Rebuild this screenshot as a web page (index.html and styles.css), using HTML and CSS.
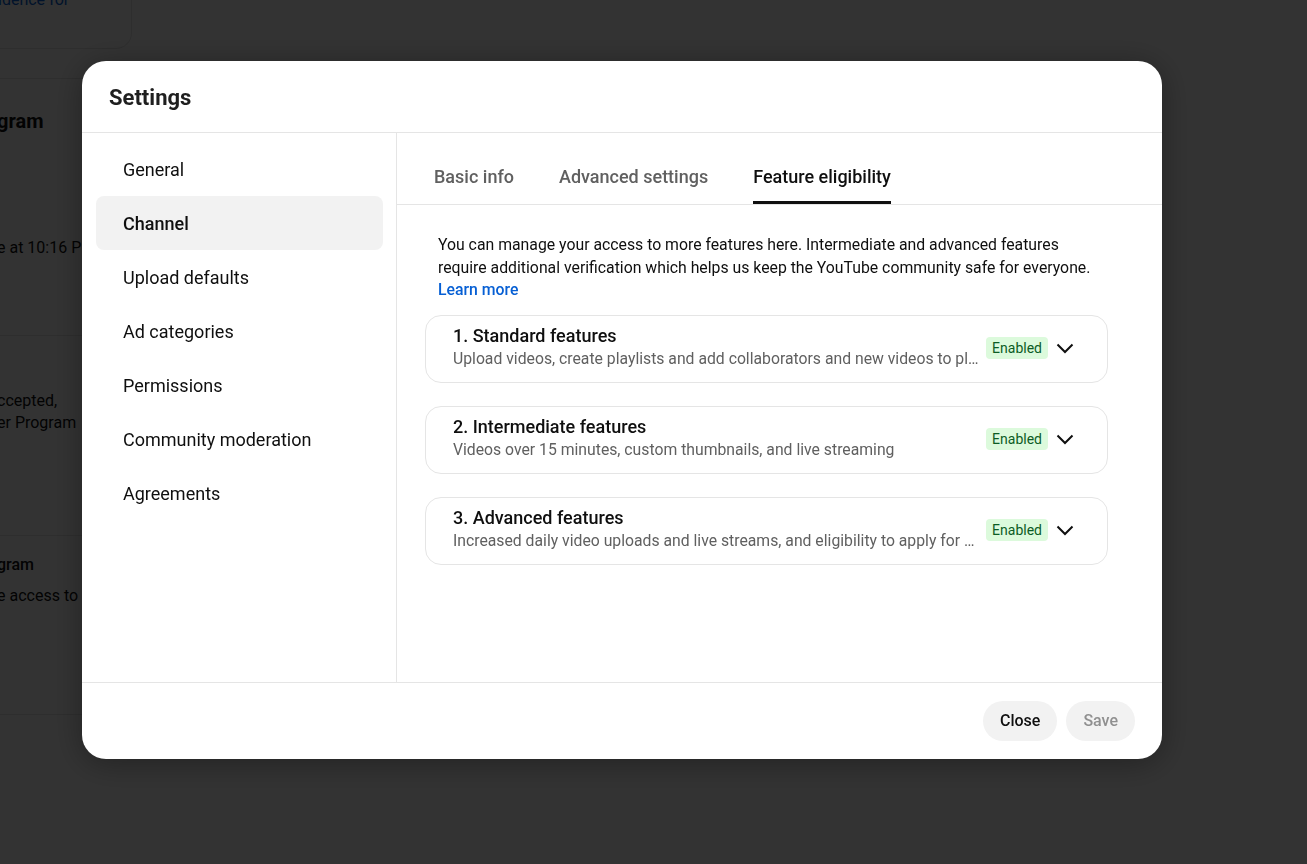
FILE: index.html
```html
<!DOCTYPE html>
<html lang="en">
<head>
    <meta charset="UTF-8">
    <meta name="viewport" content="width=device-width, initial-scale=1.0">
    <title>Settings</title>
    <link rel="stylesheet" href="styles.css">
</head>
<body>
    <!-- page behind the dialog -->
    <div class="page">
        <div class="bg-card"><span class="bg-link">idence for</span></div>
        <div class="bg-section first">
            <div class="bg-title">gram</div>
            <div class="bg-text date">e at 10:16 PM</div>
        </div>
        <div class="bg-section second">
            <div class="bg-text">ccepted,</div>
            <div class="bg-text">er Program</div>
        </div>
        <div class="bg-section third">
            <div class="bg-subtitle">gram</div>
            <div class="bg-text">e access to all</div>
        </div>
    </div>

    <div class="overlay">
        <div class="modal">
            <div class="modal-header">Settings</div>

            <div class="modal-body">
                <ul class="nav">
                    <li class="nav-item">General</li>
                    <li class="nav-item active">Channel</li>
                    <li class="nav-item">Upload defaults</li>
                    <li class="nav-item">Ad categories</li>
                    <li class="nav-item">Permissions</li>
                    <li class="nav-item">Community moderation</li>
                    <li class="nav-item">Agreements</li>
                </ul>

                <div class="content">
                    <div class="tabs">
                        <div class="tab">Basic info</div>
                        <div class="tab">Advanced settings</div>
                        <div class="tab active">Feature eligibility</div>
                    </div>

                    <div class="panel">
                        <p class="intro">You can manage your access to more features here. Intermediate and advanced features require additional verification which helps us keep the YouTube community safe for everyone. <a href="#" class="link">Learn more</a></p>

                        <div class="feature">
                            <div class="feature-text">
                                <div class="feature-title">1. Standard features</div>
                                <div class="feature-desc">Upload videos, create playlists and add collaborators and new videos to playlists, and more</div>
                            </div>
                            <span class="badge">Enabled</span>
                            <svg class="chevron" viewBox="0 0 24 24"><path d="M4.5 8.5L12 16l7.5-7.5"/></svg>
                        </div>

                        <div class="feature">
                            <div class="feature-text">
                                <div class="feature-title">2. Intermediate features</div>
                                <div class="feature-desc">Videos over 15 minutes, custom thumbnails, and live streaming</div>
                            </div>
                            <span class="badge">Enabled</span>
                            <svg class="chevron" viewBox="0 0 24 24"><path d="M4.5 8.5L12 16l7.5-7.5"/></svg>
                        </div>

                        <div class="feature">
                            <div class="feature-text">
                                <div class="feature-title">3. Advanced features</div>
                                <div class="feature-desc">Increased daily video uploads and live streams, and eligibility to apply for monetization</div>
                            </div>
                            <span class="badge">Enabled</span>
                            <svg class="chevron" viewBox="0 0 24 24"><path d="M4.5 8.5L12 16l7.5-7.5"/></svg>
                        </div>
                    </div>
                </div>
            </div>

            <div class="modal-footer">
                <button class="btn">Close</button>
                <button class="btn" disabled>Save</button>
            </div>
        </div>
    </div>
</body>
</html>
```

FILE: styles.css
```css
* { box-sizing: border-box; }
body { margin: 0; font-family: Roboto, "Noto Sans", Arial, sans-serif; color: #0f0f0f; background: #fff; overflow: hidden; }

/* background page */
.page { width: 400px; margin-left: -3px; }
.bg-card { width: 150px; height: 56px; margin-top: -7px; margin-left: -15px; padding-left: 15px; border: 1px solid #e5e5e5; border-top: none; border-radius: 0 0 16px 16px; line-height: 14px; }
.bg-link { color: #065fd4; font-size: 16px; }
.bg-section { border-top: 1px solid #e5e5e5; }
.bg-section.first { height: 257px; padding-top: 28px; margin-top: 29px; }
.bg-section.second { height: 200px; padding-top: 54px; }
.bg-section.third { height: 180px; padding-top: 17px; border-bottom: 1px solid #e5e5e5; }
.bg-title { font-size: 20px; font-weight: 700; line-height: 28px; }
.bg-subtitle { font-size: 16px; font-weight: 500; line-height: 24px; }
.bg-text { font-size: 16px; line-height: 22px; }
.bg-text.date { margin-top: 102px; }
.third .bg-text { margin-top: 8px; }

/* dialog */
.overlay { position: fixed; inset: 0; background: rgba(0, 0, 0, 0.8); padding: 61px 0 0 82px; }
.modal { width: 1080px; height: 698px; background: #fff; border-radius: 24px; box-shadow: 0 4px 32px rgba(0, 0, 0, 0.35); display: flex; flex-direction: column; overflow: hidden; }
.modal-header { height: 72px; padding: 2px 0 0 27px; display: flex; align-items: center; font-size: 22px; font-weight: 700; color: #1f1f1f; border-bottom: 1px solid #e5e5e5; flex-shrink: 0; }
.modal-body { flex: 1; display: flex; min-height: 0; }

.nav { list-style: none; margin: 0; padding: 9px 0 0; width: 315px; border-right: 1px solid #e5e5e5; flex-shrink: 0; }
.nav-item { height: 54px; margin-left: 14px; width: 287px; padding-left: 27px; display: flex; align-items: center; font-size: 18px; border-radius: 8px; color: #0f0f0f; }
.nav-item.active { background: #f2f2f2; font-weight: 500; }

.content { flex: 1; min-width: 0; display: flex; flex-direction: column; }
.tabs { height: 72px; display: flex; gap: 45px; padding-left: 37px; border-bottom: 1px solid #e5e5e5; flex-shrink: 0; }
.tab { padding-top: 18px; display: flex; align-items: center; font-size: 18px; font-weight: 500; color: #606060; border-bottom: 3px solid transparent; }
.tab.active { color: #0f0f0f; border-bottom-color: #0f0f0f; }

.panel { padding: 29px 54px 0 28px; }
.intro { margin: 0 0 13px 13px; font-size: 15.8px; line-height: 22.5px; color: #0f0f0f; }
.link { color: #065fd4; text-decoration: none; font-weight: 500; }

.feature { height: 68px; border: 1px solid #e5e5e5; border-radius: 16px; padding: 10px 30px 12px 27px; display: flex; align-items: center; margin-bottom: 23px; }
.feature-text { flex: 1; min-width: 0; }
.feature-title { font-size: 18px; font-weight: 500; line-height: 22px; }
.feature-desc { font-size: 15.75px; line-height: 23px; color: #606060; white-space: nowrap; overflow: hidden; text-overflow: ellipsis; }
.badge { background: #dcfadc; color: #0c5c24; font-size: 14px; font-weight: 400; line-height: 22px; padding: 0 6px; border-radius: 4px; margin-left: 2px; }
.chevron { width: 24px; height: 24px; margin-left: 5px; fill: none; stroke: #0f0f0f; stroke-width: 2; }

.modal-footer { height: 77px; border-top: 1px solid #e5e5e5; display: flex; justify-content: flex-end; align-items: center; gap: 9px; padding: 0 27px 1px 0; flex-shrink: 0; }
.btn { height: 40px; padding: 0 17px; border: none; border-radius: 20px; background: #f2f2f2; font-family: Roboto, Arial, sans-serif; font-size: 16px; font-weight: 500; color: #0f0f0f; cursor: pointer; }
.btn:disabled { color: #909090; cursor: default; }
```
